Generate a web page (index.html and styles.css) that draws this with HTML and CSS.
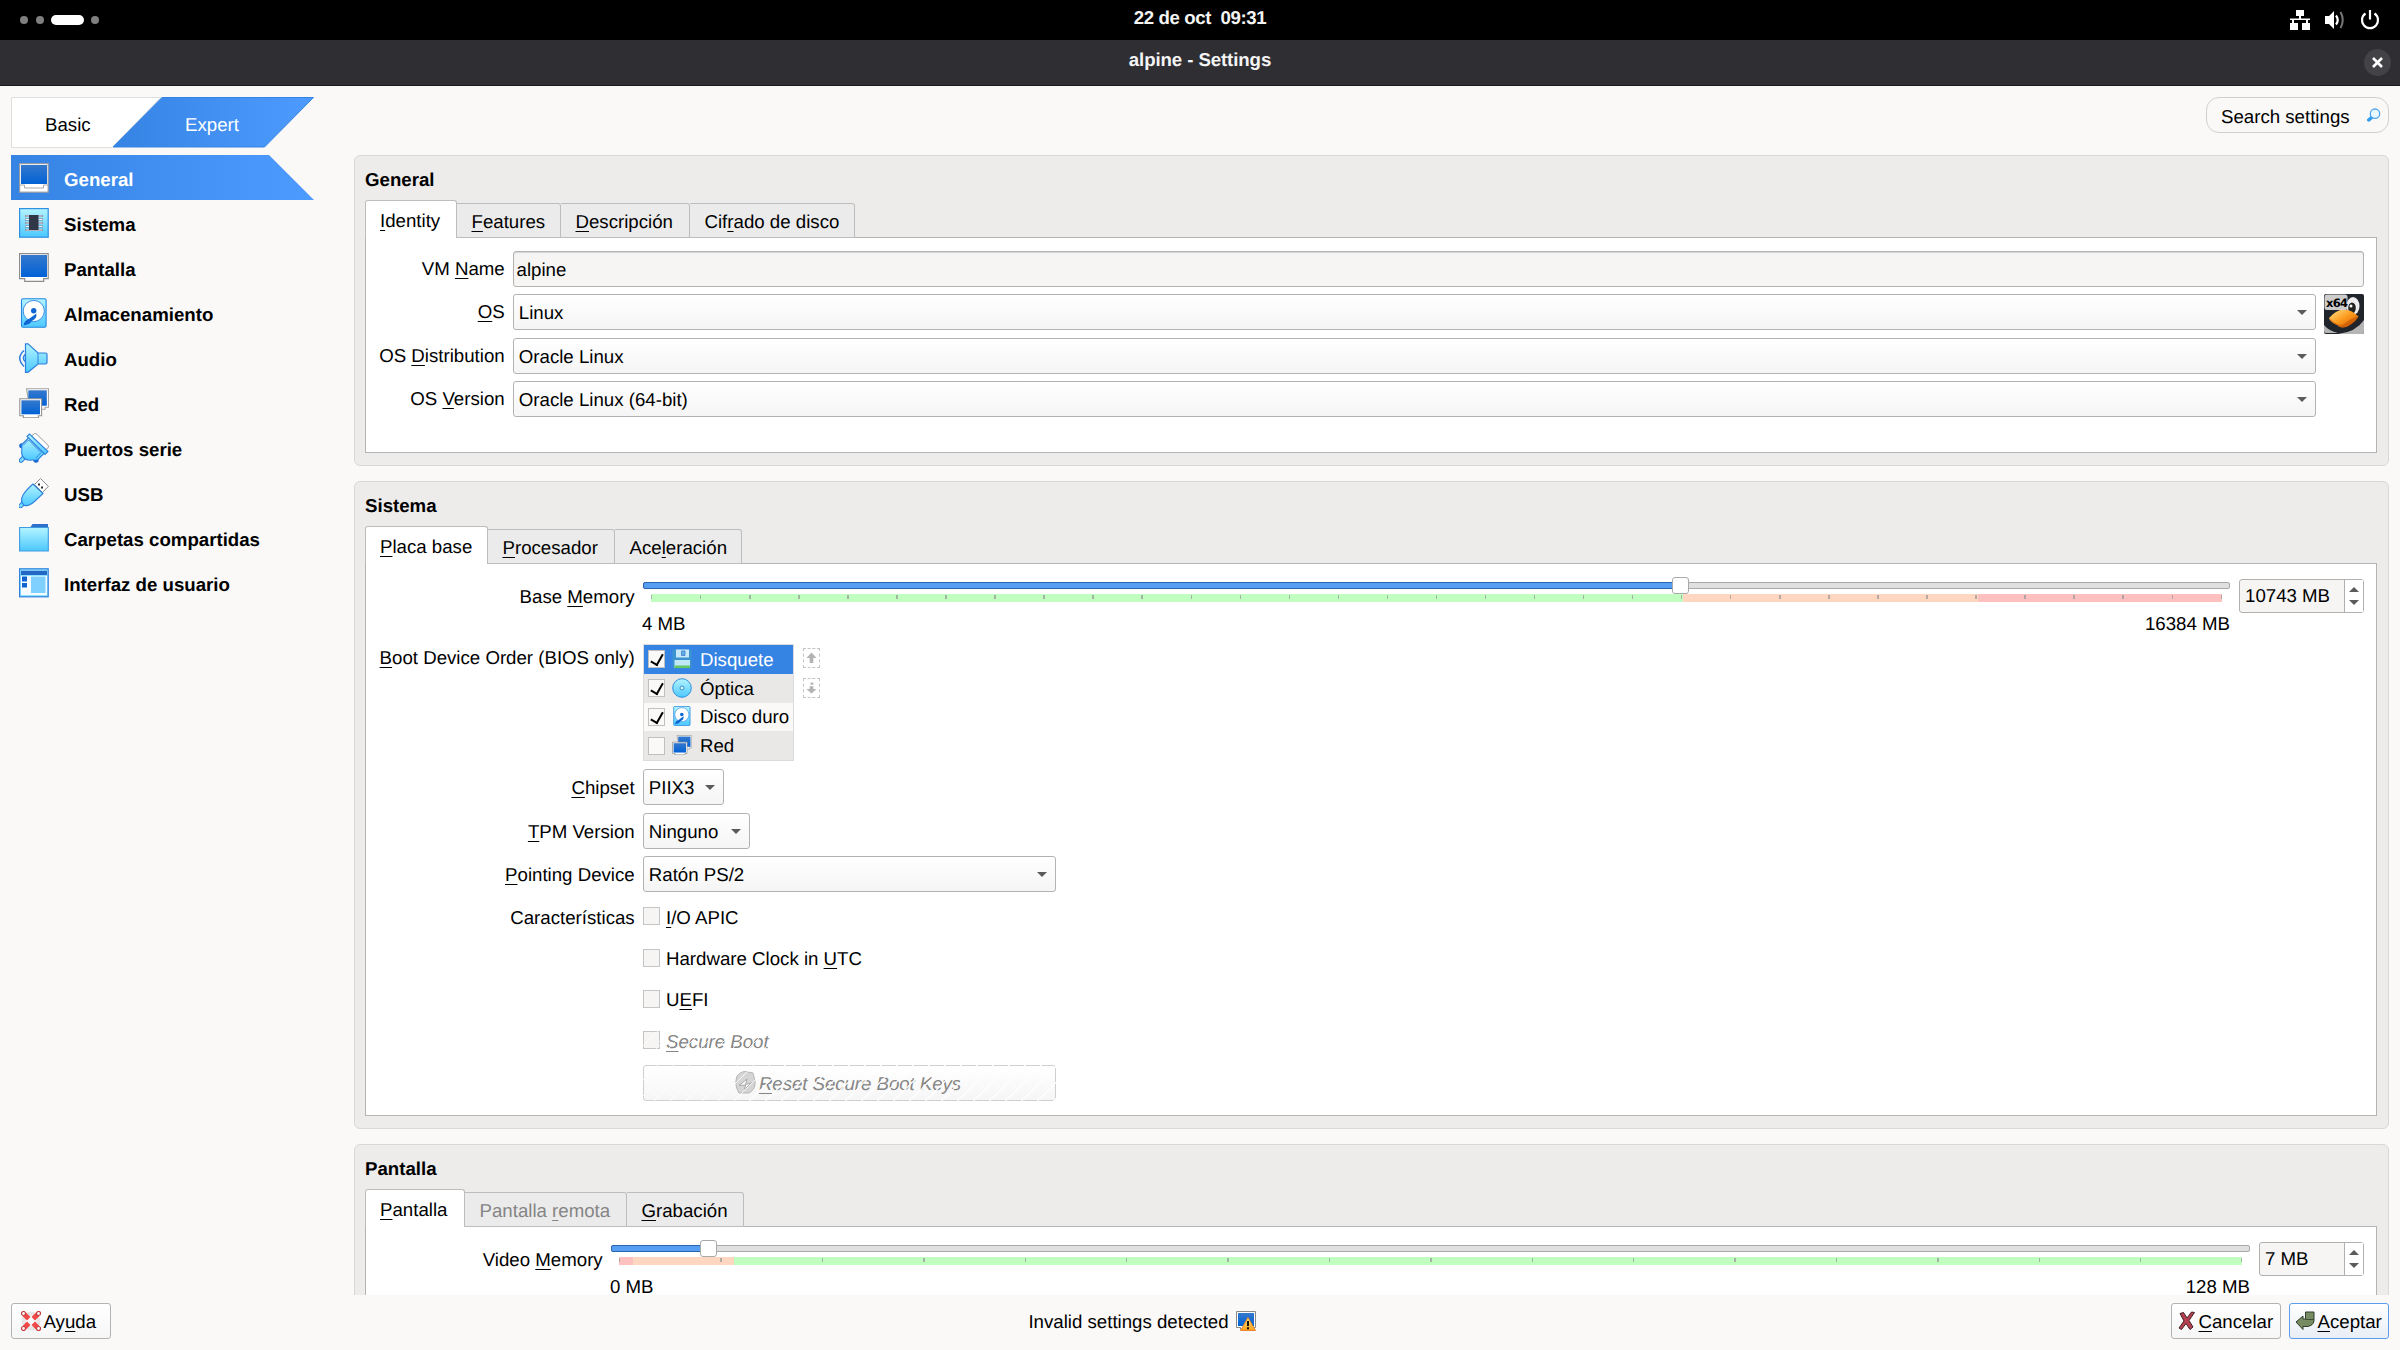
FILE: index.html
```html
<!DOCTYPE html>
<html lang="es">
<head>
<meta charset="utf-8">
<title>alpine - Settings</title>
<link rel="stylesheet" href="styles.css">
</head>
<body>
<svg class="defs" width="0" height="0">
  <defs>
    <linearGradient id="cyan" x1="0" y1="0" x2="0" y2="1"><stop offset="0" stop-color="#b4f4ff"/><stop offset="1" stop-color="#4cc8ff"/></linearGradient>
    <linearGradient id="blue" x1="0" y1="0" x2="0" y2="1"><stop offset="0" stop-color="#3578cd"/><stop offset="1" stop-color="#0062d6"/></linearGradient>
    <linearGradient id="beak" x1="0" y1="0" x2="1" y2="1"><stop offset="0" stop-color="#ffe08a"/><stop offset=".5" stop-color="#fb9a1c"/><stop offset="1" stop-color="#c94b00"/></linearGradient>
    <linearGradient id="gold" x1="0" y1="0" x2="0" y2="1"><stop offset="0" stop-color="#ffe27a"/><stop offset="1" stop-color="#fba21c"/></linearGradient>
    <symbol id="i-disk" viewBox="0 0 30 30">
      <rect x="2.500" y=".7" width="24.600" height="28.600" rx="1.500" fill="url(#cyan)" stroke="#2387e0" stroke-width="1.100"/>
      <circle cx="14.800" cy="13" r="10.600" fill="#fff" stroke="#3d8fe6" stroke-width="1"/>
      <path d="M4.600 27.500q.3-5 5.200-6.500l7.500-5.500q1 5-4.500 7.500q-1.500 3.500-8.200 4.500z" fill="#0f66d2"/>
      <circle cx="14.700" cy="12.800" r="2.700" fill="#0f66d2"/>
    </symbol>
    <symbol id="i-net" viewBox="0 0 30 30">
      <path d="M7.500.7h22v18.500h-3.500v2h-15z" fill="#fff" stroke="#a2a2a2" stroke-width="1.100"/>
      <rect x="9.300" y="2.300" width="18.500" height="15.400" fill="url(#blue)"/>
      <path d="M.8 10.700h21.800v17h-3.200v2h-15v-2h-3.600z" fill="#fff" stroke="#929292" stroke-width="1.100"/>
      <rect x="2.400" y="12.300" width="18.600" height="14" fill="url(#blue)"/>
    </symbol>
  </defs>
</svg>

<header class="topbar">
  <div class="workspaces"><i></i><i></i><i class="on"></i><i></i></div>
  <div class="clock">22 de oct&nbsp; 09:31</div>
  <div class="tray">
    <svg width="20" height="20" viewBox="0 0 20 20"><path d="M6 0h8v6h-3v2.500h9V10h-2v3h2v7h-8v-7h4v-3h-12v3h4v7H0v-7h2v-3H0V8.500h9V6H6z" fill="#fff"/></svg>
    <svg width="20" height="20" viewBox="0 0 20 20"><path d="M0 6h4l5-5v18l-5-5H0z" fill="#fff"/><path d="M11 5.500q3.500 4.500 0 9" fill="none" stroke="#fff" stroke-width="2.200"/><path d="M15.500 2q4.500 8 0 16" fill="none" stroke="#777" stroke-width="2"/></svg>
    <svg width="20" height="20" viewBox="0 0 20 20"><path d="M5.500 3.500A8 8 0 1 0 14.500 3.500M10 0v9.500" fill="none" stroke="#fff" stroke-width="2.200"/></svg>
  </div>
</header>
<div class="titlebar">
  <b>alpine - Settings</b>
  <span class="close"><svg width="11" height="11" viewBox="0 0 11 11"><path d="M1 1l9 9M10 1l-9 9" stroke="#fff" stroke-width="2.600"/></svg></span>
</div>

<main class="window">
  <aside class="sidebar">
    <svg class="modes" width="304" height="51" viewBox="0 0 304 51">
      <defs><linearGradient id="sel"><stop offset="0" stop-color="#3584e4"/><stop offset="1" stop-color="#4d9bff"/></linearGradient></defs>
      <path d="M.5.5H150L101 50.500H.5z" fill="#fff" stroke="#dfdedd"/>
      <path d="M151 .5H302.500L253.500 50H102z" fill="url(#sel)" stroke="#3584e4"/>
      <text x="34" y="34">Basic</text><text x="174" y="34" fill="#fff">Expert</text>
    </svg>
    <nav>
      <a class="current"><svg viewBox="0 0 30 30"><rect x=".6" y=".6" width="28.600" height="28.600" fill="#fff" stroke="#979ba2" stroke-width="1.200"/><rect x="2" y="2" width="26" height="19" fill="url(#blue)"/><path d="M1 22h4.500v3h19v-3h4.500" fill="none" stroke="#aaa"/></svg><span>General</span></a>
      <a><svg viewBox="0 0 30 30"><rect x=".6" y=".6" width="28.600" height="28.600" fill="url(#cyan)" stroke="#2f8fe0" stroke-width="1.200"/><path d="M6 8h18M6 11.500h18M6 15h18M6 18.500h18M6 22h18" stroke="#778" stroke-width="2.200"/><path d="M6.500 8h17M6.500 11.500h17M6.500 15h17M6.500 18.500h17M6.500 22h17" stroke="#eef" stroke-width="1"/><rect x="10" y="7" width="9.500" height="15" fill="#303848"/></svg><span>Sistema</span></a>
      <a><svg viewBox="0 0 30 30"><path d="M.6.6h28.600v25h-4.500v2.800h-19v-2.800H.6z" fill="#fff" stroke="#8d8d8d" stroke-width="1.200"/><rect x="2" y="2" width="26" height="22" fill="url(#blue)"/></svg><span>Pantalla</span></a>
      <a><svg><use href="#i-disk"/></svg><span>Almacenamiento</span></a>
      <a><svg viewBox="0 0 30 30"><path d="M5 7.500Q-3.500 15 5 23.500" fill="none" stroke="#2f80dc" stroke-width="1.600"/><path d="M7 11.500h-1q-3.500 3.500 0 7h1" fill="#8fe2ff" stroke="#2f80dc" stroke-width="1.200"/><path d="M6.500 .8H9L19 10H26.500Q28 10 28 11.500V19.500Q28 21 26.500 21H19L9 29.300H6.500z" fill="url(#cyan)" stroke="#2f80dc" stroke-width="1.200"/><path d="M19 10V21" stroke="#2f80dc"/></svg><span>Audio</span></a>
      <a><svg><use href="#i-net"/></svg><span>Red</span></a>
      <a><svg viewBox="0 0 30 30"><path d="M12.500 3L15.500.6Q17 .4 18 1.500L29.300 12.500V14.500L26.500 17z" fill="#fff" stroke="#999"/><path d="M2 27.500l4-4" stroke="#2f80dc" stroke-width="4.600" stroke-linecap="round"/><path d="M2 27.500l4-4" stroke="#7bdcff" stroke-width="2.600" stroke-linecap="round"/><circle cx="2.700" cy="12.700" r="2.500" fill="#1767d0"/><circle cx="17" cy="27" r="2.700" fill="#1767d0"/><path d="M10 4.500L2.800 11.500V17.500Q2 22 5 25Q8 28 13 27H18.500L25.500 20z" fill="url(#cyan)" stroke="#2f80dc" stroke-width="1.100"/><path d="M8 3.500L10.500 1L29 18.500L26 21.500z" fill="url(#cyan)" stroke="#2f80dc" stroke-width="1.100"/><path d="M4 12.500L9.500 7L22 19.500L17 25" fill="none" stroke="#2f80dc" stroke-width=".9"/></svg><span>Puertos serie</span></a>
      <a><svg viewBox="0 0 30 30"><path d="M15.500 6.500L21.500.6L29.400 8.300L23.500 14.500z" fill="#fff" stroke="#888"/><path d="M19 5.500h2v2h-2zM22 8.500h2v2h-2z" fill="#333"/><path d="M1.500 28l4-4" stroke="#2f80dc" stroke-width="4.600" stroke-linecap="round"/><path d="M1.500 28l4-4" stroke="#7bdcff" stroke-width="2.600" stroke-linecap="round"/><path d="M14 6L24 15.500L16 23Q10 28.500 5.500 27.500Q.5 24 4 17Q7 12 14 6z" fill="url(#cyan)" stroke="#2f80dc" stroke-width="1.100"/></svg><span>USB</span></a>
      <a><svg viewBox="0 0 30 30"><path d="M11.500 6V4l2-3H29v6z" fill="#2f70cc"/><path d="M.6 4.500H29.300V28H.6z" fill="url(#cyan)" stroke="#3f9be0" stroke-width="1.100"/></svg><span>Carpetas compartidas</span></a>
      <a><svg viewBox="0 0 30 30"><rect x=".6" y=".8" width="28.600" height="28" fill="#8fe2ff" stroke="#2f80dc" stroke-width="1.200"/><path d="M2 2.800H28V7H2z" fill="#2567c4"/><path d="M2 8H28V27H2z" fill="#f4fcff"/><path d="M3 8.500h5v5H3zM3 15h5v4.500H3z" fill="#0f62d2"/><path d="M12 8.500h14.500V25H12z" fill="#7fd0ff"/></svg><span>Interfaz de usuario</span></a>
    </nav>
  </aside>

  <section class="content">
    <div class="toolbar"><div class="search"><span>Search settings</span><svg width="14" height="14" viewBox="0 0 14 14"><path d="M1.700 12l3.500-3" stroke="#2f9df0" stroke-width="3.400" stroke-linecap="round"/><circle cx="8" cy="5.700" r="4.700" fill="#e8faff" stroke="#4fa6ee" stroke-width="1.300"/></svg></div></div>
    <div class="scroll">

      <section class="panel p-general">
        <h2>General</h2>
        <div class="tabs"><span class="active" style="width:92px"><u>I</u>dentity</span><span style="width:104px"><u>F</u>eatures</span><span style="width:129px"><u>D</u>escripción</span><span style="width:165px">Cif<u>r</u>ado de disco</span></div>
        <div class="pane idgrid">
          <label>VM <u>N</u>ame</label><div class="input">alpine</div>
          <label><u>O</u>S</label><div class="pair"><div class="combo">Linux</div>
            <svg class="os" width="40" height="40" viewBox="0 0 40 40"><rect width="40" height="40" rx="2" fill="#20242b"/><path d="M0 31q5 6 14 8h-12q-2 0-2-2zM40 26v12q0 2-2 2H14q18-2 26-14z" fill="#b5b5b5"/><ellipse cx="29" cy="12" rx="6.500" ry="9" fill="#eee"/><ellipse cx="28" cy="14" rx="3.800" ry="5.500" fill="#222"/><circle cx="27" cy="12" r="1.500" fill="#fff"/><path d="M5 24Q12 16 19 15.500Q27 15 34.500 22.500Q31 28 26 31Q18 36 13 31Q6 28 5 24z" fill="url(#beak)"/><path d="M5 24Q15 34 21 29.500Q27 24 34.500 22.500Q32 28 26 31Q18 36 13 31Q6 28 5 24z" fill="#c55300" opacity=".6"/><rect x=".5" y=".5" width="23" height="15.500" rx="2.500" fill="#d6d6d6" opacity=".95"/><text x="2" y="12.500" class="badge">x64</text></svg></div>
          <label>OS <u>D</u>istribution</label><div class="combo short">Oracle Linux</div>
          <label>OS <u>V</u>ersion</label><div class="combo short">Oracle Linux (64-bit)</div>
        </div>
      </section>

      <section class="panel p-system">
        <h2>Sistema</h2>
        <div class="tabs"><span class="active" style="width:123px"><u>P</u>laca base</span><span style="width:127px"><u>P</u>rocesador</span><span style="width:127px">Ace<u>l</u>eración</span></div>
        <div class="pane sysform">
          <div class="row r-mem"><label>Base <u>M</u>emory</label>
            <div class="slider"><div class="groove"><div class="fill" style="width:65.300%"></div><div class="knob" style="left:64.850%"></div></div><div class="scale mem"></div><div class="ends"><span>4 MB</span><span>16384 MB</span></div></div>
            <div class="spin"><span>10743 MB</span><div><i class="up"></i><i class="down"></i></div></div></div>
          <div class="row r-boot"><label><u>B</u>oot Device Order (BIOS only)</label>
            <ul class="boot">
              <li class="sel"><i class="check on"></i><svg viewBox="0 0 20 20"><path d="M.5.500h19v19H2l-1.500-1.500z" fill="#3b93d0"/><path d="M4 .5h13v8H4z" fill="#c8e9fa"/><path d="M9.500 2h3.500v4.500H9.500z" fill="#64aee8" stroke="#3a7fc6" stroke-width=".8"/><path d="M2.500 11h15.500v8H2.500z" fill="#bfe8f6"/><path d="M2.500 16.500h15.500v2.500H2.500z" fill="#63c764"/></svg>Disquete</li>
              <li class="alt"><i class="check on"></i><svg viewBox="0 0 20 20"><circle cx="10" cy="10" r="9.300" fill="url(#cyan)" stroke="#2f90dd"/><circle cx="10" cy="10" r="2" fill="#d8f5ff" stroke="#3a8fcc"/></svg>Óptica</li>
              <li><i class="check on"></i><svg><use href="#i-disk"/></svg>Disco duro</li>
              <li class="alt"><i class="check"></i><svg><use href="#i-net"/></svg>Red</li>
            </ul>
            <div class="movers"><span><svg viewBox="0 0 12 12"><path d="M6 0l5.500 6H8v5.500H4V6H.5z" fill="#b3b3b3"/></svg></span><span><svg viewBox="0 0 12 12"><path d="M6 12L.5 7H4V4h4v3h3.500zM5 0h3v2.500H5z" fill="#b3b3b3"/></svg></span></div></div>
          <div class="row r-combo"><label><u>C</u>hipset</label><div class="combo" style="width:81px">PIIX3</div></div>
          <div class="row r-combo"><label><u>T</u>PM Version</label><div class="combo" style="width:107px">Ninguno</div></div>
          <div class="row r-combo r-last"><label><u>P</u>ointing Device</label><div class="combo" style="width:413px">Ratón PS/2</div></div>
          <div class="row r-check"><label>Características</label><i class="check flat"></i><span><u>I</u>/O APIC</span></div>
          <div class="row r-check"><label></label><i class="check flat"></i><span>Hardware Clock in <u>U</u>TC</span></div>
          <div class="row r-check"><label></label><i class="check flat"></i><span>U<u>E</u>FI</span></div>
          <div class="row r-check disabled"><label></label><i class="check flat hatch"></i><span class="hatch"><u>S</u>ecure Boot</span></div>
          <div class="row r-reset disabled"><label></label><div class="button hatch"><svg width="21" height="24" viewBox="0 0 21 24"><path d="M2 5Q7-1 13 1l5 1l2 8q1 8-6 12L4 22Q-1 14 2 5z" fill="#d5d5d5" stroke="#b5b5b5"/><path d="M4 14.500l8-6.500-1.500 5.500 6-1.500-7 6 1-4z" fill="#fff" stroke="#aaa"/></svg><span><u>R</u>eset Secure Boot Keys</span></div></div>
        </div>
      </section>

      <section class="panel p-display">
        <h2>Pantalla</h2>
        <div class="tabs"><span class="active" style="width:100px"><u>P</u>antalla</span><span class="off" style="width:162px">Pantalla <u>r</u>emota</span><span style="width:117px"><u>G</u>rabación</span></div>
        <div class="pane dispform">
          <div class="row r-mem"><label>Video <u>M</u>emory</label>
            <div class="slider"><div class="groove"><div class="fill" style="width:5.800%"></div><div class="knob" style="left:5.430%"></div></div><div class="scale video"></div><div class="ends"><span>0 MB</span><span>128 MB</span></div></div>
            <div class="spin"><span>7 MB</span><div><i class="up"></i><i class="down"></i></div></div></div>
        </div>
      </section>
    </div>
  </section>
</main>

<footer class="actions">
  <div class="button help"><svg width="20" height="20" viewBox="0 0 20 20"><circle cx="10" cy="10" r="7.500" fill="none" stroke="#e5e5e5" stroke-width="4"/><path d="M5 2.500L8.500 6L6 8.500L2.500 5zM15 2.500L11.500 6L14 8.500L17.500 5zM5 17.500L8.500 14L6 11.500L2.500 15zM15 17.500L11.500 14L14 11.500L17.500 15z" fill="#f04848" stroke="#f04848" stroke-width="1.400"/><g fill="#fff" stroke="#c83a3a" stroke-width="1.200"><circle cx="2.500" cy="2.500" r="2"/><circle cx="17.500" cy="2.500" r="2"/><circle cx="2.500" cy="17.500" r="2"/><circle cx="17.500" cy="17.500" r="2"/></g></svg><span>Ay<u>u</u>da</span></div>
  <div class="status"><span>Invalid settings detected</span><svg width="20" height="20" viewBox="0 0 20 20"><path d="M.5.500h19v16h-4v2h-11v-2h-4z" fill="#fff" stroke="#888"/><path d="M2 2h16v13H2z" fill="url(#blue)"/><path d="M12 6.500L19.500 19.500H4.500z" fill="url(#gold)" stroke="#e8862a"/><path d="M12 10v5M12 16.200v2" stroke="#111" stroke-width="2"/></svg></div>
  <div class="right">
    <div class="button cancel"><svg width="18" height="20" viewBox="0 0 18 20"><path d="M2 2.500L5.500 1.500L9 7L13.500 1L16.500 1.500L11 9.500L15 16L12 18.500L8 12.500L3.500 18.500L1 17L6 10z" fill="#b6404f" stroke="#402228"/></svg><span><u>C</u>ancelar</span></div>
    <div class="button accept"><svg width="20" height="20" viewBox="0 0 20 20"><path d="M1 11L8 5v3h2.500V1H19v9q-1 5-7 5.500H8V18.500z" fill="#768b61" stroke="#2e3d2c"/><path d="M10.500 8.500H19" stroke="#3c4d36"/></svg><span><u>A</u>ceptar</span></div>
  </div>
</footer>
</body>
</html>
```
FILE: styles.css
```css
* { box-sizing: border-box; }
body {
  margin: 0; width: 2400px; height: 1350px; overflow: hidden;
  display: flex; flex-direction: column;
  background: #faf9f8; color: #000;
  font: 18.67px/22px "Liberation Sans", Arial, sans-serif;
  text-rendering: geometricPrecision; white-space: nowrap;
}
.defs { position: absolute; }
u { text-decoration: underline; text-decoration-thickness: 1px; text-underline-offset: 3px; text-decoration-skip-ink: none; }

.topbar { height: 40px; background: #000; color: #f4f4f4; display: grid; grid-template-columns: 1fr auto 1fr; align-items: center; font-weight: bold; }
.workspaces { display: flex; align-items: center; gap: 8px; padding-left: 20px; }
.workspaces i { width: 8px; height: 8px; border-radius: 50%; background: #808080; }
.workspaces .on { width: 33px; height: 10px; border-radius: 5px; background: #fff; margin: 0 -1px; }
.clock { padding-bottom: 5px; letter-spacing: -.4px; }
.tray { display: flex; justify-content: flex-end; gap: 15px; padding-right: 20px; }
.titlebar { height: 46px; background: #2e2e33; border-bottom: 1px solid #1d1a1e; color: #f4f4f4; display: grid; place-items: center; position: relative; }
.titlebar b { padding-bottom: 5px; letter-spacing: -.1px; }
.close { position: absolute; right: 9px; top: 9px; width: 27px; height: 27px; border-radius: 50%; background: #434347; display: grid; place-items: center; }

.window { height: 1209px; display: flex; }
.sidebar { width: 354px; padding: 11px 0 0 11px; }
.modes { display: block; margin-bottom: 7px; }
.sidebar a { display: flex; align-items: center; height: 45px; padding-left: 8px; font-weight: bold; }
.sidebar a svg { width: 30px; height: 30px; margin-right: 15px; }
.sidebar a span { padding-top: 5px; }
.sidebar .current { width: 303px; color: #fff; background: linear-gradient(90deg, #3584e4, #4d9bff); clip-path: polygon(0 0, 258px 0, 303px 100%, 0 100%); }

.content { width: 2035px; display: flex; flex-direction: column; }
.toolbar { height: 69px; padding-top: 11px; display: flex; justify-content: flex-end; }
.search { width: 183px; height: 36px; border: 1px solid #d2d0ce; border-radius: 13px; display: flex; align-items: center; padding: 4px 7px 0 14px; justify-content: space-between; }
.search svg { margin-bottom: 5px; }
.scroll { flex: 1; overflow: hidden; display: flex; flex-direction: column; gap: 15px; }
.panel { flex: none; border: 1px solid #d9d8d7; border-radius: 6px; background: #edeceb; padding: 0 11px 0 10px; }
.p-general { height: 311px; }
.p-system { height: 648px; }
.p-display { height: 300px; }
h2 { margin: 0; height: 44px; padding-top: 13px; font-size: 18.67px; line-height: 22px; }

.tabs { display: flex; align-items: flex-end; height: 38px; position: relative; z-index: 1; }
.tabs span { height: 35px; padding: 7px 0 0 14.500px; border: 1px solid #bdbdbd; border-left: 0; border-radius: 0 3px 0 0; background: #ebebeb; }
.tabs .active { height: 38px; padding: 9px 0 0 14px; background: #fff; border-left: 1px solid #bdbdbd; border-bottom: 0; border-radius: 3px 3px 0 0; }
.tabs .off { color: #858585; }
.pane { margin-top: -1px; background: #fff; border: 1px solid #b4b4b4; }
.p-general .pane { height: 216px; }
.p-system .pane { height: 553px; }
.p-display .pane { height: 240px; }

label { text-align: right; position: relative; left: .7px; }
.idgrid { display: grid; grid-template-columns: 138px 1851px; grid-auto-rows: 36px; gap: 7.5px 9px; padding-top: 12.6px; }
.idgrid label { padding-top: 7px; }
.input, .combo, .button { height: 36px; border: 1px solid #b3b3b3; border-radius: 3px; }
.input { background: #f6f5f4; padding: 7px 0 0 2.500px; box-shadow: inset 0 1px 1px #d4d4d4; }
.combo { background: linear-gradient(#fff, #f5f5f5); padding: 7.400px 0 0 4.800px; position: relative; }
.combo::after { content: ""; position: absolute; right: 8.500px; top: 15px; border: 5px solid transparent; border-top-color: #5b5b5b; border-bottom: 0; }
.short { width: 1803px; }
.pair { display: flex; gap: 8px; }
.pair .combo { width: 1803px; }
.os { flex: none; }
.badge { font: bold 11.500px "DejaVu Sans", sans-serif; letter-spacing: -.7px; }

.row { display: flex; align-items: flex-start; }
.row > label { width: 268px; margin-right: 9px; flex: none; }
.dispform .row > label { width: 236px; }
.r-mem { height: 80px; padding-top: 15px; }
.r-mem > label { padding-top: 7px; }
.slider { width: 1587px; padding-top: 3px; }
.dispform .slider { width: 1639px; }
.groove { height: 7px; border: 1px solid #a9a9a9; border-radius: 2px; background: #e0e0e0; position: relative; }
.fill { position: absolute; left: -1px; top: -1px; height: 7px; border: 1px solid #2a65b0; border-radius: 2px; background: #559ef4; }
.knob { position: absolute; top: -6px; width: 17px; height: 17px; border: 1px solid #aaa; border-radius: 3px; background: #fff; }
.dispform .knob { margin-left: -1px; }
.scale { height: 8px; margin: 5px 8px 0 7.500px; position: relative; }
.scale::after { content: ""; position: absolute; left: 0; right: 0; top: 1px; height: 4px; background: repeating-linear-gradient(90deg, #999b 0 1.400px, transparent 1.400px var(--pitch)); }
.mem { --pitch: 49.050px; background: linear-gradient(90deg, #c0ffc0 65.700%, #ffd6c0 65.700% 84.460%, #ffc0c0 84.460%); }
.video { --pitch: 101.400px; background: linear-gradient(90deg, #ffc0c0 .850%, #ffd6c0 .850% 7.080%, #c0ffc0 7.080%); }
.ends { display: flex; justify-content: space-between; padding-top: 11px; margin-left: -1px; }
.spin { width: 125px; height: 34px; margin-left: 9px; border: 1px solid #b0b0b0; border-radius: 3px; background: #f6f5f4; display: flex; justify-content: space-between; }
.dispform .spin { width: 105px; }
.spin span { padding: 5px 0 0 5px; }
.spin div { width: 19px; border-left: 1px solid #b0b0b0; background: #fff; display: flex; flex-direction: column; align-items: center; justify-content: center; gap: 8px; }
.spin i { border: 5px solid transparent; }
.spin .up { border-bottom-color: #5b5b5b; border-top: 0; }
.spin .down { border-top-color: #5b5b5b; border-bottom: 0; }

.r-boot { height: 125px; }
.r-boot > label { padding-top: 3px; }
.boot { list-style: none; margin: 0; padding: 0; width: 151px; height: 117px; border: 1px solid #dcdcdc; background: #faf9f8; }
.boot li { height: 28.750px; display: flex; align-items: center; padding: 1px 0 0 4px; }
.boot .sel { background: #3584e4; color: #fff; }
.boot .alt { background: #e9e8e6; }
.boot svg { width: 20px; height: 20px; margin: 0 8px 2px 7px; }
.check { width: 17px; height: 18px; border: 1px solid #c0c0c0; background: #faf9f8; position: relative; flex: none; margin-bottom: 1px; }
.check.flat { background: #f6f5f4; border-color: #c5c5c5; margin-bottom: 0; }
.check.on::after { content: ""; position: absolute; left: 4px; top: 1px; width: 6px; height: 11px; border: solid #000; border-width: 0 2.500px 2.500px 0; transform: rotate(30deg); }
.movers { display: flex; flex-direction: column; gap: 10px; padding: 4px 0 0 9px; }
.movers span { width: 17px; height: 20px; border: 1px dashed #c4c4c4; display: grid; place-items: center; }
.movers svg { width: 11px; height: 12px; }
.r-combo { height: 43.500px; }
.r-combo > label { padding-top: 8px; }
.r-last { height: 39.600px; }
.r-check { height: 41.300px; align-items: center; }
.r-check > label { padding-top: 3px; }
.r-check > span { padding: 3px 0 0 6px; }
.disabled { color: #858585; font-style: italic; }
.hatch { position: relative; }
.hatch::before { content: ""; position: absolute; inset: -1px; z-index: 1; background: repeating-linear-gradient(135deg, transparent 0 10px, #fffc 10px 11.300px); }
.r-reset { padding-top: 4.200px; }
.r-reset .button { width: 413px; justify-content: center; border-color: #cfcfcf; padding-right: 3px; }
.r-reset .button span { padding-left: 3px; letter-spacing: -.05px; }

.button { display: flex; align-items: center; background: linear-gradient(#fff, #f6f6f6); }
.button span { padding: 2px 0 0 2.500px; }
.actions { height: 55px; padding: 8px 11px 0; display: grid; grid-template-columns: 1fr auto 1fr; align-items: start; }
.help { width: 100px; padding-left: 9px; }
.status { display: flex; align-items: center; height: 36px; gap: 7px; padding-left: 82px; transform: translateX(-99px); }
.status span { padding-top: 2px; }
.right { display: flex; justify-content: flex-end; gap: 8px; }
.cancel { width: 110px; padding-left: 6px; }
.accept { width: 100px; padding-left: 5px; border-color: #5c9deb; background: linear-gradient(#fff, #e9eef5); }
```
